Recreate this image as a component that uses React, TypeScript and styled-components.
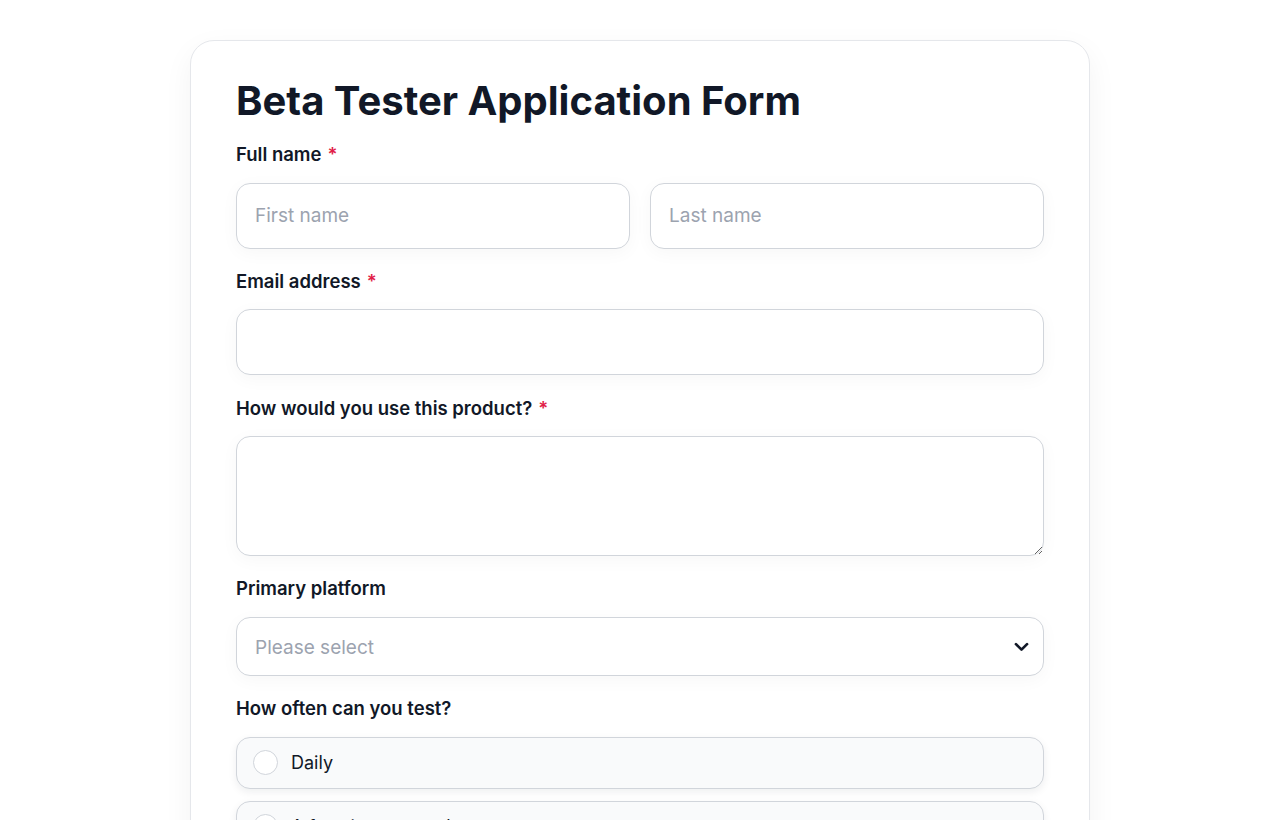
import React from 'react'
import styled, { createGlobalStyle } from 'styled-components'

const GlobalStyle = createGlobalStyle`
  * { box-sizing: border-box; }
  html, body {
    margin: 0;
    background: #fff;
    font-family: 'Inter', 'Liberation Sans', sans-serif;
    color: #111827;
  }
`

const Page = styled.div`
  display: flex;
  justify-content: center;
  padding-top: 40px;
`

const Card = styled.form`
  width: 900px;
  background: #fff;
  border: 1px solid #e5e7eb;
  border-radius: 24px;
  padding: 34px 45px 40px;
  box-shadow: 0 10px 30px rgba(17, 24, 39, 0.05);
  display: flex;
  flex-direction: column;
`

const Title = styled.h1`
  margin: 0 0 15px;
  font-size: 40px;
  line-height: 52px;
  font-weight: 700;
  color: #111827;
`

const Field = styled.div`
  display: flex;
  flex-direction: column;
  margin-bottom: 20.25px;
`

const Label = styled.label`
  font-size: 18.5px;
  line-height: 24px;
  font-weight: 600;
  color: #111827;
  margin-bottom: 16.5px;
`

const Required = styled.span`
  color: #e11d48;
  margin-left: 6px;
`

const Row = styled.div`
  display: grid;
  grid-template-columns: 1fr 1fr;
  gap: 20px;
`

const inputBase = `
  display: block;
  width: 100%;
  border: 1px solid #d1d5db;
  border-radius: 14px;
  background: #fff;
  font-family: 'Inter', 'Liberation Sans', sans-serif;
  font-size: 19px;
  color: #111827;
  padding: 0 18px;
  outline: none;
  box-shadow: 0 4px 18px rgba(17, 24, 39, 0.035);
  &::placeholder { color: #9ca3af; }
`

const Input = styled.input`
  ${inputBase}
  height: 66px;
`

const TextArea = styled.textarea`
  ${inputBase}
  height: 120px;
  padding: 14px 18px;
  resize: vertical;
`

const SelectBox = styled.div`
  ${inputBase}
  height: 59px;
  display: flex;
  align-items: center;
  justify-content: space-between;
  padding: 3px 12px 0 18px;
  color: #9ca3af;
`

const Chevron = styled.svg`
  width: 19px;
  height: 19px;
  margin-top: -3px;
  color: #111827;
`

const Options = styled.div`
  display: flex;
  flex-direction: column;
  gap: 12px;
`

const Option = styled.label`
  height: 52px;
  display: flex;
  align-items: center;
  gap: 13px;
  padding: 0 16px;
  border: 1px solid #d1d5db;
  border-radius: 14px;
  background: #f9fafb;
  box-shadow: 0 3px 8px rgba(17, 24, 39, 0.07);
  font-size: 18px;
  color: #111827;
`

const Radio = styled.span`
  width: 25px;
  height: 25px;
  border-radius: 50%;
  border: 1.5px solid #d1d5db;
  background: #fff;
  flex-shrink: 0;
`

const frequencies = ['Daily', 'A few times a week', 'Weekly', 'Occasionally']

export default function App() {
  return (
    <>
      <GlobalStyle />
      <Page>
        <Card onSubmit={(e) => e.preventDefault()}>
          <Title>Beta Tester Application Form</Title>

          <Field>
            <Label>
              Full name<Required>*</Required>
            </Label>
            <Row>
              <Input placeholder='First name' />
              <Input placeholder='Last name' />
            </Row>
          </Field>

          <Field>
            <Label>
              Email address<Required>*</Required>
            </Label>
            <Input type='email' />
          </Field>

          <Field>
            <Label>
              How would you use this product?<Required>*</Required>
            </Label>
            <TextArea />
          </Field>

          <Field>
            <Label>Primary platform</Label>
            <SelectBox>
              Please select
              <Chevron viewBox='0 0 24 24' fill='none' stroke='currentColor' strokeWidth='3.4' strokeLinecap='round' strokeLinejoin='round'>
                <path d='M5 9l7 7 7-7' />
              </Chevron>
            </SelectBox>
          </Field>

          <Field>
            <Label>How often can you test?</Label>
            <Options>
              {frequencies.map((f) => (
                <Option key={f}>
                  <Radio />
                  {f}
                </Option>
              ))}
            </Options>
          </Field>
        </Card>
      </Page>
    </>
  )
}
